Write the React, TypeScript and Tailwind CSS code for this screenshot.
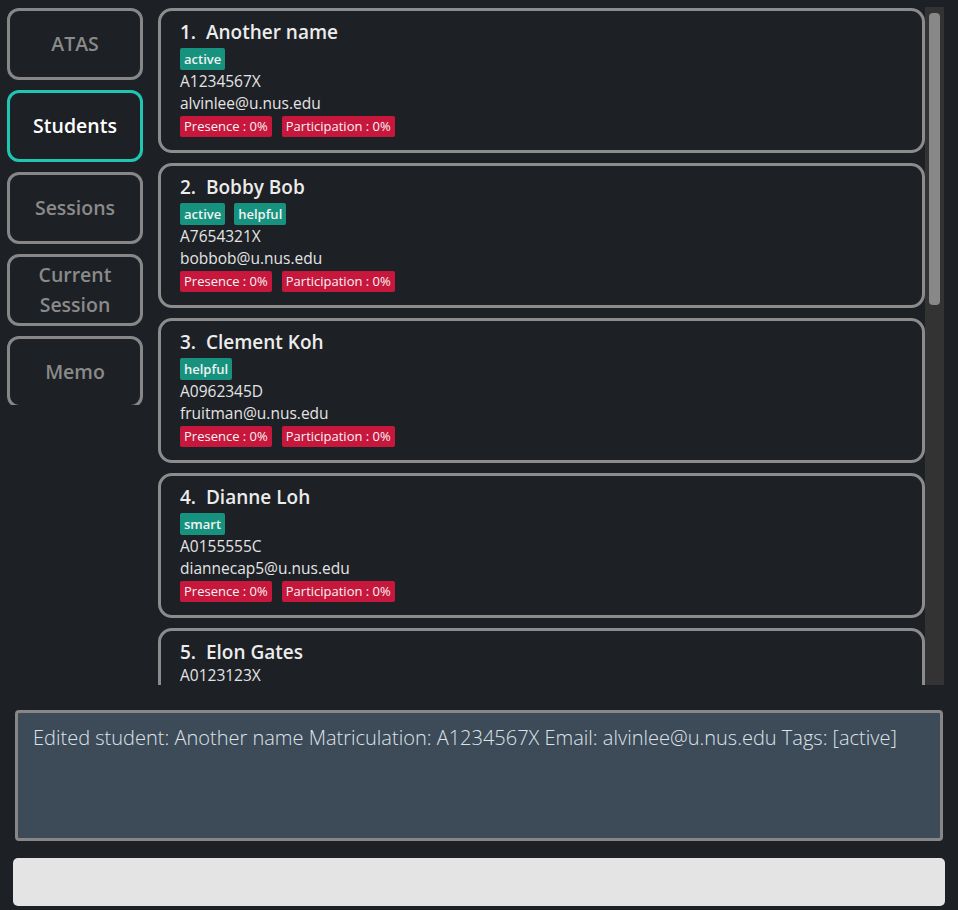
const font = "font-['Open_Sans','Noto_Sans',sans-serif]";

const navItems = [
  { label: "ATAS", active: false },
  { label: "Students", active: true },
  { label: "Sessions", active: false },
  { label: "Current Session", active: false, twoLine: true },
  { label: "Memo", active: false },
];

const students = [
  { name: "Another name", tags: ["active"], matric: "A1234567X", email: "alvinlee@u.nus.edu" },
  { name: "Bobby Bob", tags: ["active", "helpful"], matric: "A7654321X", email: "bobbob@u.nus.edu" },
  { name: "Clement Koh", tags: ["helpful"], matric: "A0962345D", email: "fruitman@u.nus.edu" },
  { name: "Dianne Loh", tags: ["smart"], matric: "A0155555C", email: "diannecap5@u.nus.edu" },
  { name: "Elon Gates", tags: [], matric: "A0123123X", email: "elongates@u.nus.edu" },
];

function NavButton({ label, active, twoLine }: { label: string; active: boolean; twoLine?: boolean }) {
  return (
    <div
      className={`h-[72px] shrink-0 rounded-[12px] border-[3px] flex items-center justify-center text-center text-[19.5px] font-semibold ${
        active ? "border-[#1fc7b3] text-white" : "border-[#878787] text-[#8a8a8a]"
      } ${twoLine ? "leading-[30px] px-6" : ""}`}
    >
      {label}
    </div>
  );
}

function StudentCard({ idx, s }: { idx: number; s: (typeof students)[number] }) {
  return (
    <div className="h-[145px] shrink-0 rounded-[14px] border-[3px] border-[#8c8c8c] pl-[19px] pt-[9px] flex flex-col">
      <div className="text-[19px] font-semibold leading-[24px] text-[#ececec] whitespace-pre">
        {`${idx}.  ${s.name}`}
      </div>
      {s.tags.length > 0 && (
        <div className="flex gap-[9px] mt-[4px]">
          {s.tags.map((t) => (
            <span
              key={t}
              className="h-[22px] px-[4px] rounded-[2px] bg-[#17927f] text-[#f2f2f2] text-[13px] font-semibold leading-[22px]"
            >
              {t}
            </span>
          ))}
        </div>
      )}
      <div className="text-[15.5px] leading-[22px] text-[#e4e4e4]">{s.matric}</div>
      <div className="text-[15.5px] leading-[22px] text-[#e4e4e4]">{s.email}</div>
      <div className="flex gap-[10px] mt-[2px]">
        <span className="h-[21px] px-[4px] rounded-[2px] bg-[#c8173c] text-[#f4f4f4] text-[13px] leading-[21px]">
          Presence : 0%
        </span>
        <span className="h-[21px] px-[4px] rounded-[2px] bg-[#c8173c] text-[#f4f4f4] text-[13px] leading-[21px]">
          Participation : 0%
        </span>
      </div>
    </div>
  );
}

export default function App() {
  return (
    <div className={`w-[958px] h-[910px] bg-[#1d2025] flex flex-col ${font}`}>
      <div className="flex h-[685px] pt-[7px]">
        <div className="w-[158px] shrink-0 pl-[7px] pr-[15px] pt-[1px] h-[398px] overflow-hidden flex flex-col gap-[10px]">
          {navItems.map((n) => (
            <NavButton key={n.label} {...n} />
          ))}
        </div>
        <div className="w-[786px] flex h-full">
          <div className="flex-1 overflow-hidden pt-[1px] flex flex-col gap-[10px]">
            {students.map((s, i) => (
              <StudentCard key={s.name} idx={i + 1} s={s} />
            ))}
          </div>
          <div className="w-[19px] h-full bg-[#333333] px-[4px] pt-[6px]">
            <div className="h-[292px] rounded-[4px] bg-[#888888]" />
          </div>
        </div>
      </div>
      <div className="mt-[25px] mx-[15px] h-[131px] border-[3px] border-[#878787] rounded-[4px] bg-[#3d4b58] pl-[15px] pt-[11px]">
        <div className="text-[20px] font-light text-[#dde3ea] leading-[28px]">
          Edited student: Another name Matriculation: A1234567X Email: alvinlee@u.nus.edu Tags: [active]
        </div>
      </div>
      <div className="mt-[17px] mx-[13px] h-[48px] rounded-[5px] bg-[#e4e4e4]" />
    </div>
  );
}
